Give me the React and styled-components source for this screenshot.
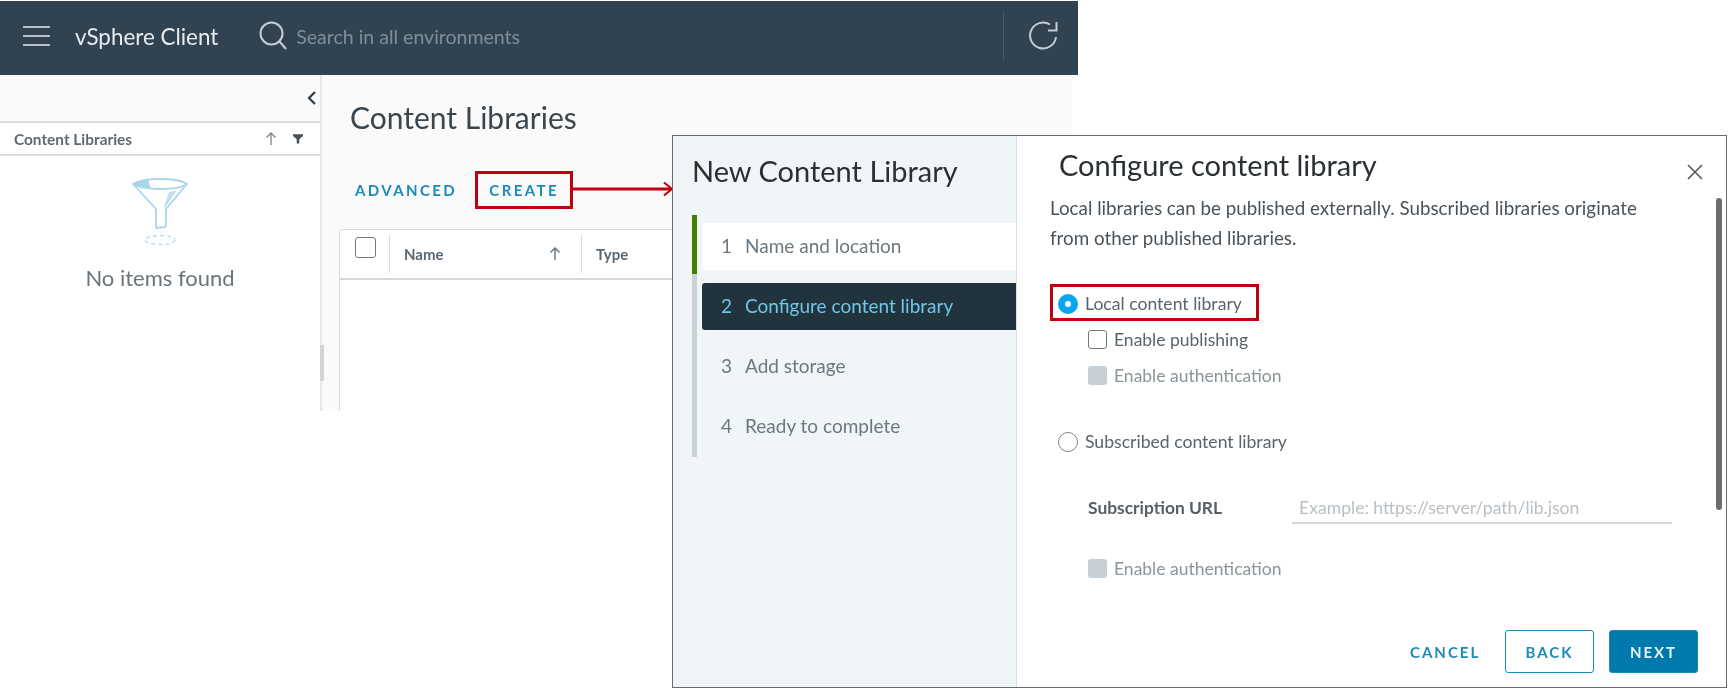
import React from "react";
import styled, { createGlobalStyle } from "styled-components";

const Global = createGlobalStyle`
  html, body { margin: 0; padding: 0; background: #fff; }
  body { font-family: "Lato", "Open Sans", "Liberation Sans", sans-serif; }
  * { box-sizing: border-box; }
`;

const Page = styled.div`
  position: relative;
  width: 1728px;
  height: 690px;
  overflow: hidden;
  background: #fff;
  filter: blur(0.5px);
`;

const Shell = styled.div`
  width: 1078px;
  padding-top: 1px;
  display: flex;
  flex-direction: column;
`;

const TopBar = styled.header`
  height: 74px;
  background: #314351;
  display: flex;
  align-items: center;
  padding: 0 0 4px 23px;
  color: #fff;
`;

const BarTitle = styled.div`
  margin-left: 25px;
  font-size: 22.4px;
  color: #e6ebee;
  white-space: nowrap;
`;

const SearchIcon = styled.svg`
  margin-left: 41px;
  flex: none;
`;

const SearchText = styled.div`
  margin-left: 9px;
  font-size: 19.5px;
  color: #7f8e99;
  white-space: nowrap;
`;

const BarDivider = styled.div`
  width: 1px;
  height: 50px;
  margin-left: auto;
  background: #46586a;
`;

const RefreshIcon = styled.svg`
  margin: 0 19px 0 23px;
  flex: none;
`;

const Content = styled.div`
  height: 336px;
  margin-right: 6px;
  display: flex;
  background: #fafafa;
`;

const Side = styled.aside`
  width: 322px;
  flex: none;
  display: flex;
  flex-direction: column;
  position: relative;
  border-right: 2px solid #e8e8e8;
`;

const Collapse = styled.div`
  height: 46px;
  display: flex;
  align-items: center;
  justify-content: flex-end;
  padding: 0 2px 0 0;
`;

const Tree = styled.div`
  flex: 1;
  background: #fff;
  border-top: 2px solid #dcdcdc;
  display: flex;
  flex-direction: column;
`;

const TreeHead = styled.div`
  height: 33px;
  display: flex;
  align-items: center;
  padding: 0 17px 0 14px;
  border-bottom: 2px solid #dedede;
  font-size: 15.4px;
  font-weight: 700;
  color: #5f6b73;
`;

const TreeTools = styled.div`
  margin-left: auto;
  display: flex;
  align-items: center;
  gap: 16px;
`;

const Empty = styled.div`
  display: flex;
  flex-direction: column;
  align-items: center;
  padding-top: 20px;
`;

const EmptyText = styled.div`
  margin-top: 18px;
  font-size: 22px;
  color: #6a747b;
`;

const SideThumb = styled.div`
  position: absolute;
  right: -4px;
  top: 270px;
  width: 4px;
  height: 36px;
  background: #d4d4d4;
`;

const Main = styled.main`
  flex: 1;
  padding: 0 0 0 17px;
  min-width: 0;
  display: flex;
  flex-direction: column;
`;

const PageTitle = styled.h1`
  margin: 25px 0 0 11px;
  font-size: 30px;
  line-height: 34px;
  font-weight: 400;
  color: #3c4650;
`;

const Actions = styled.div`
  display: flex;
  align-items: center;
  margin: 37px 0 0 16px;
  height: 38px;
`;

const ActionButton = styled.span`
  font-size: 15px;
  font-weight: 700;
  letter-spacing: 2.4px;
  color: #1c8bb8;
`;

const CreateHighlight = styled.div`
  margin-left: 18px;
  width: 98px;
  height: 38px;
  border: 3px solid #c00010;
  display: flex;
  align-items: center;
  justify-content: center;
`;

const Grid = styled.div`
  margin-top: 20px;
  flex: 1;
  background: #fff;
  border: 1px solid #dcdcdc;
  border-bottom: 0;
  border-radius: 3px 3px 0 0;
`;

const GridHead = styled.div`
  height: 50px;
  display: flex;
  align-items: stretch;
  border-bottom: 2px solid #d8d8d8;
  font-size: 15px;
  font-weight: 700;
  color: #5c6770;
`;

const HeadBox = styled.div`
  width: 49px;
  padding: 7px 0 0 15px;
  flex: none;
`;

const HeadCell = styled.div`
  display: flex;
  align-items: center;
  width: ${(p) => p.$w}px;
  margin: 5px 0 5px;
  padding: 0 20px 0 14px;
  border-left: 1px solid #dcdcdc;
  justify-content: space-between;
`;

const Box = styled.span`
  display: block;
  flex: none;
  width: ${(p) => p.$size || 19}px;
  height: ${(p) => p.$size || 19}px;
  border-radius: 3px;
  border: ${(p) => (p.$disabled ? "0" : "1.5px solid #6f7a82")};
  background: ${(p) => (p.$disabled ? "#c6d0d6" : "#fff")};
`;

const Modal = styled.section`
  position: absolute;
  left: 672px;
  top: 135px;
  width: 1055px;
  height: 553px;
  border: 1.5px solid #666c70;
  background: #fff;
  display: flex;
`;

const Wizard = styled.div`
  width: 344px;
  flex: none;
  background: #f0f5f8;
  border-right: 1px solid #d8e0e4;
  padding: 19px 0 0 19px;
`;

const WizardTitle = styled.h2`
  margin: 0;
  font-size: 29px;
  line-height: 32px;
  font-weight: 400;
  color: #2a3036;
  white-space: nowrap;
`;

const Steps = styled.div`
  margin-top: 28px;
  height: 242px;
  display: flex;
  flex-direction: column;
  gap: 13px;
  position: relative;
  padding: 8px 0 0 5px;
  border-left: 5px solid #cbd3d8;
`;

const Progress = styled.div`
  position: absolute;
  left: -5px;
  top: 0;
  width: 5px;
  height: 59px;
  background: #3f8200;
`;

const Step = styled.div`
  height: 47px;
  display: flex;
  align-items: center;
  padding: 0 0 3px 19px;
  gap: 14px;
  font-size: 19px;
  border-radius: 3px 0 0 3px;
  white-space: nowrap;
  background: ${(p) => (p.$done ? "#fff" : p.$active ? "#21333d" : "transparent")};
  color: ${(p) => (p.$active ? "#6fc6e8" : "#6c787f")};
`;

const StepNum = styled.span`
  width: 10px;
  text-align: center;
`;

const Pane = styled.div`
  flex: 1;
  position: relative;
  padding: 12px 0 0 33px;
  min-width: 0;
`;

const PaneTitle = styled.h2`
  margin: 0 0 0 9px;
  font-size: 29px;
  line-height: 34px;
  font-weight: 400;
  color: #2a3036;
`;

const Close = styled.svg`
  position: absolute;
  right: 23px;
  top: 28px;
`;

const Lead = styled.p`
  margin: 11px 0 0;
  width: 610px;
  font-size: 18.8px;
  line-height: 30px;
  color: #4a535a;
`;

const RadioHighlight = styled.div`
  margin-top: 31px;
  width: 209px;
  height: 37px;
  border: 3px solid #c00010;
  padding-top: 2px;
  display: flex;
  align-items: center;
`;

const RadioRow = styled.div`
  display: flex;
  align-items: center;
  gap: 7px;
  padding-left: ${(p) => p.$inset ?? 8}px;
  margin-top: ${(p) => p.$mt || 0}px;
  font-size: 17.6px;
  color: #59646b;
`;

const Radio = styled.span`
  flex: none;
  width: 20px;
  height: 20px;
  border-radius: 50%;
  background: #fff;
  border: ${(p) => (p.$on ? "7px solid #0aa5f0" : "1.5px solid #78838a")};
`;

const CheckRow = styled.div`
  display: flex;
  align-items: center;
  gap: 7px;
  margin: ${(p) => p.$mt || 0}px 0 0 38px;
  height: 20px;
  font-size: 17.5px;
  color: ${(p) => (p.$disabled ? "#8b9499" : "#59646b")};
`;

const UrlRow = styled.div`
  display: flex;
  align-items: flex-end;
  margin: 32px 0 0 38px;
  height: 40px;
`;

const UrlLabel = styled.label`
  width: 204px;
  font-size: 17.4px;
  font-weight: 700;
  color: #565f66;
  padding-bottom: 6px;
`;

const UrlInput = styled.div`
  width: 380px;
  height: 34px;
  padding: 3px 7px 0;
  display: flex;
  align-items: center;
  border-bottom: 2px solid #d6d6d6;
  font-size: 17.6px;
  color: #b9bfc3;
`;

const Footer = styled.div`
  position: absolute;
  right: 28px;
  bottom: 14px;
  display: flex;
  align-items: center;
`;

const FooterButton = styled.button`
  width: ${(p) => p.$w || 89}px;
  height: 43px;
  margin-left: ${(p) => p.$ml || 0}px;
  border-radius: 3px;
  border: ${(p) => (p.$variant === "link" ? "0" : "1.5px solid #1c8bb8")};
  background: ${(p) => (p.$variant === "solid" ? "#0079ad" : p.$variant === "link" ? "transparent" : "#fff")};
  color: ${(p) => (p.$variant === "solid" ? "#e6f2f7" : "#1c8bb8")};
  font-family: inherit;
  font-size: 15px;
  font-weight: 700;
  letter-spacing: 2px;
  padding: 0;
`;

const Scrollbar = styled.div`
  position: absolute;
  right: 4px;
  top: 62px;
  width: 6px;
  height: 312px;
  border-radius: 3px;
  background: #6b6f72;
`;

const Connector = styled.svg`
  position: absolute;
  left: 573px;
  top: 181px;
`;

export default function App() {
  return (
    <Page>
      <Global />
      <Shell>
        <TopBar>
          <svg width="27" height="22" viewBox="0 0 27 22">
            <path d="M0 2h27M0 11h27M0 20h27" stroke="#b6c0c8" strokeWidth="2" fill="none" />
          </svg>
          <BarTitle>vSphere Client</BarTitle>
          <SearchIcon width="28" height="30" viewBox="0 0 28 30" fill="none" stroke="#c5ced5" strokeWidth="2">
            <circle cx="12.5" cy="12.5" r="11" />
            <path d="M20.5 20.5 27 28" />
          </SearchIcon>
          <SearchText>Search in all environments</SearchText>
          <BarDivider />
          <RefreshIcon width="32" height="32" viewBox="0 0 32 32" fill="none" stroke="#c5ced5" strokeWidth="2">
            <path d="M29 17a13 13 0 1 1-6-12.5" />
            <path d="M29.5 2v8.5h-8.5" />
          </RefreshIcon>
        </TopBar>
        <Content>
          <Side>
            <Collapse>
              <svg width="12" height="16" viewBox="0 0 12 16" fill="none" stroke="#2f3a42" strokeWidth="2.2">
                <path d="M9 2 3 8l6 6" />
              </svg>
            </Collapse>
            <Tree>
              <TreeHead>
                Content Libraries
                <TreeTools>
                  <svg width="12" height="14" viewBox="0 0 12 14" fill="none" stroke="#7a858c" strokeWidth="1.3">
                    <path d="M6 13V1M1.5 5.5 6 1l4.5 4.5" />
                  </svg>
                  <svg width="10" height="11" viewBox="0 0 12 12" fill="#47525a">
                    <path d="M0 1h12v2L7.5 7v5h-3V7L0 3z" />
                  </svg>
                </TreeTools>
              </TreeHead>
              <Empty>
                <svg width="60" height="70" viewBox="0 0 60 70" fill="none">
                  <path d="M3 8c5-3 15-5 27-5s23 2 27 5L36 33v16l-1 2-9 1V33z" fill="#fff" stroke="#a9d6ea" strokeWidth="1.8" strokeLinejoin="round" />
                  <path d="M3 8c2-2 8-4 15-4.5L21 13C13 13 7 11 3 8z" fill="#a9d6ea" />
                  <path d="M47 14 35 32l-1-1 5-15z" fill="#bfe0ef" />
                  <path d="M3 8c5 3 15 5 27 5s23-2 27-5" stroke="#a9d6ea" strokeWidth="1.8" />
                  <ellipse cx="30" cy="64" rx="15" ry="4.5" stroke="#c3e2f0" strokeWidth="1.6" strokeDasharray="4 3" />
                </svg>
                <EmptyText>No items found</EmptyText>
              </Empty>
            </Tree>
            <SideThumb />
          </Side>
          <Main>
            <PageTitle>Content Libraries</PageTitle>
            <Actions>
              <ActionButton>ADVANCED</ActionButton>
              <CreateHighlight>
                <ActionButton>CREATE</ActionButton>
              </CreateHighlight>
            </Actions>
            <Grid>
              <GridHead>
                <HeadBox>
                  <Box $size={21} />
                </HeadBox>
                <HeadCell $w={192}>
                  Name
                  <svg width="12" height="14" viewBox="0 0 12 14" fill="none" stroke="#6e7980" strokeWidth="1.5">
                    <path d="M6 13V1M1.5 5.5 6 1l4.5 4.5" />
                  </svg>
                </HeadCell>
                <HeadCell $w={190}>Type</HeadCell>
              </GridHead>
            </Grid>
          </Main>
        </Content>
      </Shell>

      <Connector width="100" height="16" viewBox="0 0 100 16" fill="none">
        <path d="M0 8h98" stroke="#c00010" strokeWidth="3" />
        <path d="M91 1.5 99 8l-8 6.5" stroke="#c00010" strokeWidth="2.2" />
      </Connector>

      <Modal>
        <Wizard>
          <WizardTitle>New Content Library</WizardTitle>
          <Steps>
            <Progress />
            <Step $done>
              <StepNum>1</StepNum>Name and location
            </Step>
            <Step $active>
              <StepNum>2</StepNum>Configure content library
            </Step>
            <Step>
              <StepNum>3</StepNum>Add storage
            </Step>
            <Step>
              <StepNum>4</StepNum>Ready to complete
            </Step>
          </Steps>
        </Wizard>
        <Pane>
          <PaneTitle>Configure content library</PaneTitle>
          <Close width="16" height="16" viewBox="0 0 16 16" fill="none" stroke="#4f5a61" strokeWidth="1.6">
            <path d="M1 1l14 14M15 1 1 15" />
          </Close>
          <Lead>
            Local libraries can be published externally. Subscribed libraries originate from other published
            libraries.
          </Lead>
          <RadioHighlight>
            <RadioRow $inset={5}>
              <Radio $on />
              Local content library
            </RadioRow>
          </RadioHighlight>
          <CheckRow $mt={8}>
            <Box />
            Enable publishing
          </CheckRow>
          <CheckRow $mt={16} $disabled>
            <Box $disabled />
            Enable authentication
          </CheckRow>
          <RadioRow $mt={46}>
            <Radio />
            Subscribed content library
          </RadioRow>
          <UrlRow>
            <UrlLabel>Subscription URL</UrlLabel>
            <UrlInput>Example: https://server/path/lib.json</UrlInput>
          </UrlRow>
          <CheckRow $mt={34} $disabled>
            <Box $disabled />
            Enable authentication
          </CheckRow>
          <Footer>
            <FooterButton $variant="link" $w={70}>CANCEL</FooterButton>
            <FooterButton $ml={25}>BACK</FooterButton>
            <FooterButton $ml={15} $variant="solid">NEXT</FooterButton>
          </Footer>
          <Scrollbar />
        </Pane>
      </Modal>
    </Page>
  );
}
